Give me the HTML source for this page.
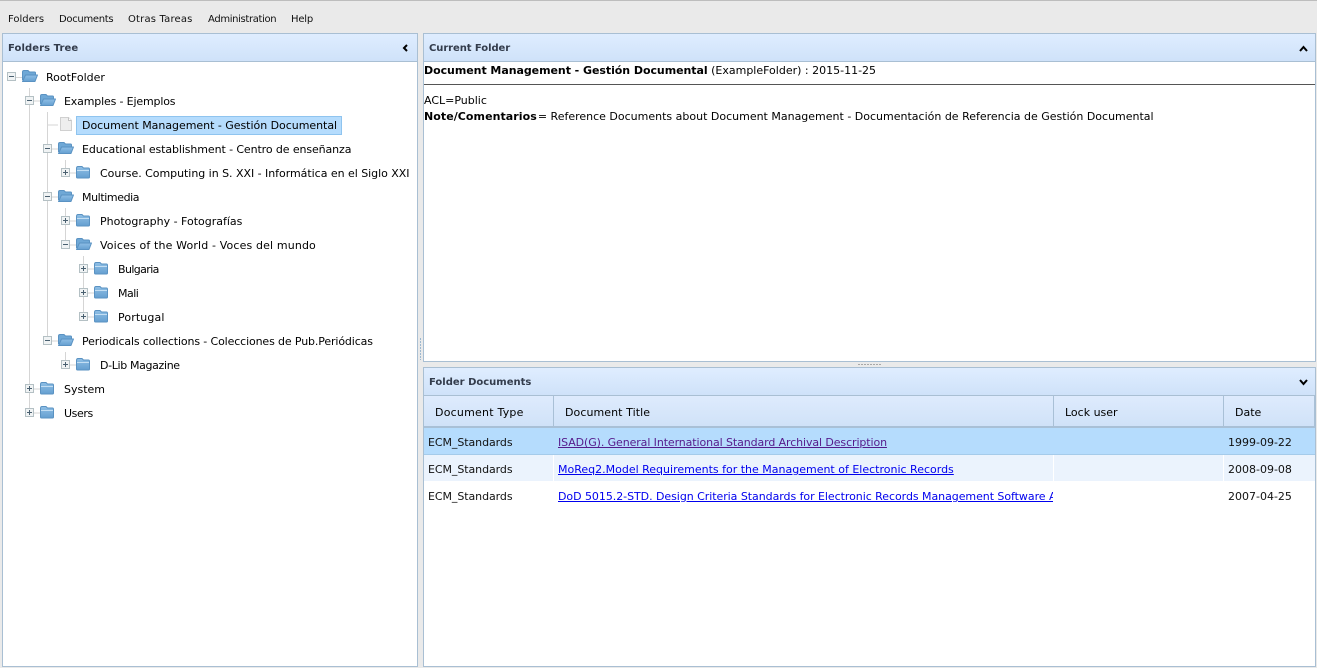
<!DOCTYPE html>
<html><head><meta charset="utf-8"><title>Folders</title>
<style>
html,body{margin:0;padding:0;width:1317px;height:668px;overflow:hidden;background:#eaeaea}
body{position:relative;font-family:"DejaVu Sans","Liberation Sans",sans-serif;font-size:11px;color:#000}
.a{position:absolute;box-sizing:border-box}
.t{position:absolute;white-space:nowrap;line-height:14px;height:14px}
.m{font-size:10px;top:13px;color:#111}
.panel{position:absolute;box-sizing:border-box;background:#fff;border:1px solid #a9bfd3}
.hd{position:absolute;box-sizing:border-box;background:linear-gradient(#dfedff,#cfe2f9);border:1px solid #a9bfd3}
.ht{font-size:10px;font-weight:bold;color:#333c4c}
.th{position:absolute;box-sizing:border-box;top:396px;height:32px;background:linear-gradient(#deebfd,#d0e2f8);border-right:1px solid #a9c0d6;border-bottom:2px solid #a9c0d6}
.tr{color:#111}
a{color:#0000ee;text-decoration:underline}
svg{position:absolute;left:0;top:0}
</style></head><body>
<div class="a" style="left:0;top:0;width:1317px;height:1px;background:#bdbdbd"></div>
<div class="t m" style="left:8px">Folders</div>
<div class="t m" style="left:59px;letter-spacing:-.3px">Documents</div>
<div class="t m" style="left:128px;letter-spacing:.18px">Otras Tareas</div>
<div class="t m" style="left:208px;letter-spacing:-.35px">Administration</div>
<div class="t m" style="left:291px;letter-spacing:-.2px">Help</div>

<div class="panel" style="left:2px;top:33px;width:416px;height:634px"></div>
<div class="hd" style="left:2px;top:33px;width:416px;height:29px"></div>
<div class="t ht" style="left:8px;top:42px;letter-spacing:.08px">Folders Tree</div>

<div class="panel" style="left:423px;top:33px;width:893px;height:329px"></div>
<div class="hd" style="left:423px;top:33px;width:893px;height:29px"></div>
<div class="t ht" style="left:429px;top:42px;letter-spacing:-.07px">Current Folder</div>

<div class="panel" style="left:423px;top:367px;width:893px;height:300px"></div>
<div class="hd" style="left:423px;top:367px;width:893px;height:29px"></div>
<div class="t ht" style="left:429px;top:376px">Folder Documents</div>

<div class="t" style="left:424px;top:64px"><b style="letter-spacing:-.05px">Document Management - Gestión Documental</b> (ExampleFolder) : 2015-11-25</div>
<div class="a" style="left:424px;top:84px;width:891px;height:1px;background:#555"></div>
<div class="t" style="left:424px;top:94px">ACL=Public</div>
<div class="t" style="left:424px;top:110px"><b style="letter-spacing:.06px">Note/Comentarios</b><span style="margin-left:1px">=</span> Reference Documents about Document Management - Documentación de Referencia de Gestión Documental</div>

<!-- table -->
<div class="th" style="left:424px;width:130px"></div>
<div class="th" style="left:554px;width:500px"></div>
<div class="th" style="left:1054px;width:170px"></div>
<div class="th" style="left:1224px;width:91px"></div>
<div class="t" style="left:435px;top:406px;letter-spacing:.22px">Document Type</div>
<div class="t" style="left:565px;top:406px;letter-spacing:.07px">Document Title</div>
<div class="t" style="left:1065px;top:406px">Lock user</div>
<div class="t" style="left:1235px;top:406px">Date</div>

<div class="a" style="left:424px;top:428px;width:891px;height:27px;background:#b5dcfd;border-bottom:1px solid #a5cbea"></div>
<div class="a" style="left:424px;top:455px;width:891px;height:27px;background:#ebf3fd;border-bottom:1px solid #fff"></div>
<div class="a" style="left:553px;top:455px;width:1px;height:26px;background:#fff"></div>
<div class="a" style="left:1053px;top:455px;width:1px;height:26px;background:#fff"></div>
<div class="a" style="left:1223px;top:455px;width:1px;height:26px;background:#fff"></div>

<div class="t tr" style="left:428px;top:436px;letter-spacing:-.07px">ECM_Standards</div>
<div class="t tr" style="left:428px;top:463px;letter-spacing:-.07px">ECM_Standards</div>
<div class="t tr" style="left:428px;top:490px;letter-spacing:-.07px">ECM_Standards</div>
<div class="t" style="left:558px;top:436px"><a href="#" style="color:#551a8b;letter-spacing:-.1px">ISAD(G). General International Standard Archival Description</a></div>
<div class="t" style="left:558px;top:463px"><a href="#">MoReq2.Model Requirements for the Management of Electronic Records</a></div>
<div class="t" style="left:558px;top:490px;width:495px;overflow:hidden"><a href="#" style="letter-spacing:-.05px">DoD 5015.2-STD. Design Criteria Standards for Electronic Records Management Software Applications</a></div>
<div class="t tr" style="left:1228px;top:436px">1999-09-22</div>
<div class="t tr" style="left:1228px;top:463px">2008-09-08</div>
<div class="t tr" style="left:1228px;top:490px">2007-04-25</div>

<!-- tree selection -->
<div class="a" style="left:76px;top:116px;width:266px;height:19px;background:#b5dcfd;border:1px solid #8fc4ef"></div>

<!-- tree text -->
<div class="t" style="left:46px;top:71px">RootFolder</div>
<div class="t" style="left:64px;top:95px;letter-spacing:-.16px">Examples - Ejemplos</div>
<div class="t" style="left:82px;top:119px;letter-spacing:-.03px">Document Management - Gestión Documental</div>
<div class="t" style="left:82px;top:143px;letter-spacing:-.1px">Educational establishment - Centro de enseñanza</div>
<div class="t" style="left:100px;top:167px;letter-spacing:-.035px">Course. Computing in S. XXI - Informática en el Siglo XXI</div>
<div class="t" style="left:82px;top:191px;letter-spacing:-.4px">Multimedia</div>
<div class="t" style="left:100px;top:215px">Photography - Fotografías</div>
<div class="t" style="left:100px;top:239px;letter-spacing:.14px">Voices of the World - Voces del mundo</div>
<div class="t" style="left:118px;top:263px;letter-spacing:-.6px">Bulgaria</div>
<div class="t" style="left:118px;top:287px;letter-spacing:-.5px">Mali</div>
<div class="t" style="left:118px;top:311px;letter-spacing:.12px">Portugal</div>
<div class="t" style="left:82px;top:335px;letter-spacing:-.13px">Periodicals collections - Colecciones de Pub.Periódicas</div>
<div class="t" style="left:100px;top:359px;letter-spacing:-.35px">D-Lib Magazine</div>
<div class="t" style="left:64px;top:383px">System</div>
<div class="t" style="left:64px;top:407px;letter-spacing:-.4px">Users</div>

<svg width="1317" height="668" viewBox="0 0 1317 668">
<defs>
<linearGradient id="fg" x1="0" y1="0" x2="0" y2="1"><stop offset="0" stop-color="#8fbfe6"/><stop offset="1" stop-color="#659fd0"/></linearGradient>
<g id="closed">
<path d="M0.5 2.5 Q0.5 0.5 2 0.5 H6 L7.5 2 H12.5 Q13.5 2 13.5 3.5 V11 Q13.5 12 12.5 12 H1.5 Q0.5 12 0.5 11 Z" fill="url(#fg)" stroke="#5a92c2"/>
<path d="M1 4.5 H13" stroke="#c3def3" fill="none"/>
</g>
<g id="open">
<path d="M0.5 10 V2 Q0.5 0.5 2 0.5 H6 L7.5 2 H12.5 Q13.5 2 13.5 3 V5" fill="#6fa8d6" stroke="#5a92c2"/>
<path d="M0.5 11.5 L3.5 5 H15.5 L13 11.5 Z" fill="url(#fg)" stroke="#5a92c2" stroke-linejoin="round"/>
</g>
<g id="minus"><rect x="0.5" y="0.5" width="8" height="8" fill="#f0f3f4" stroke="#b4c0c4"/><path d="M2 4.5 H7" stroke="#4a6070"/></g>
<g id="plus"><rect x="0.5" y="0.5" width="8" height="8" fill="#f0f3f4" stroke="#b4c0c4"/><path d="M2 4.5 H7 M4.5 2 V7" stroke="#4a6070"/></g>
</defs>

<g stroke="#d5d5d5" fill="none">
<path d="M29.5 88 V413 M29.5 101 H40 M29.5 389 H40 M29.5 413 H40"/>
<path d="M47.5 112 V341 M47.5 125 H58 M47.5 149 H58 M47.5 197 H58 M47.5 341 H58"/>
<path d="M65.5 160 V173 M65.5 208 V245 M65.5 352 V365 M65.5 173 H76 M65.5 221 H76 M65.5 245 H76 M65.5 365 H76"/>
<path d="M83.5 256 V317 M83.5 269 H94 M83.5 293 H94 M83.5 317 H94"/>
<path d="M12 77.5 H22"/>
</g>

<use href="#minus" x="7" y="72"/><use href="#open" x="22" y="70"/>
<use href="#minus" x="25" y="96"/><use href="#open" x="40" y="94"/>
<use href="#minus" x="43" y="144"/><use href="#open" x="58" y="142"/>
<use href="#plus" x="61" y="168"/><use href="#closed" x="76" y="166"/>
<use href="#minus" x="43" y="192"/><use href="#open" x="58" y="190"/>
<use href="#plus" x="61" y="216"/><use href="#closed" x="76" y="214"/>
<use href="#minus" x="61" y="240"/><use href="#open" x="76" y="238"/>
<use href="#plus" x="79" y="264"/><use href="#closed" x="94" y="262"/>
<use href="#plus" x="79" y="288"/><use href="#closed" x="94" y="286"/>
<use href="#plus" x="79" y="312"/><use href="#closed" x="94" y="310"/>
<use href="#minus" x="43" y="336"/><use href="#open" x="58" y="334"/>
<use href="#plus" x="61" y="360"/><use href="#closed" x="76" y="358"/>
<use href="#plus" x="25" y="384"/><use href="#closed" x="40" y="382"/>
<use href="#plus" x="25" y="408"/><use href="#closed" x="40" y="406"/>

<!-- document icon -->
<path d="M60.5 117.5 H68.5 L71.5 120.5 V130.5 H60.5 Z" fill="#eeeeee" stroke="#d0d0d0"/>
<path d="M68.5 117.5 V120.5 H71.5" fill="#fff" stroke="#c4c4c4"/>

<!-- collapse arrows -->
<path d="M407 45 L404 48 L407 51" fill="none" stroke="#000" stroke-width="2"/>
<path d="M1300 51 L1303.5 47 L1307 51" fill="none" stroke="#000" stroke-width="2"/>
<path d="M1300 380 L1303.5 384 L1307 380" fill="none" stroke="#000" stroke-width="2"/>

<!-- splitters -->
<path d="M420.5 338 V360" stroke="#9db8cf" stroke-dasharray="2 1" fill="none"/>
<path d="M858 364.5 H881" stroke="#a8a8a8" stroke-dasharray="2 1" fill="none"/>
</svg>
</body></html>
